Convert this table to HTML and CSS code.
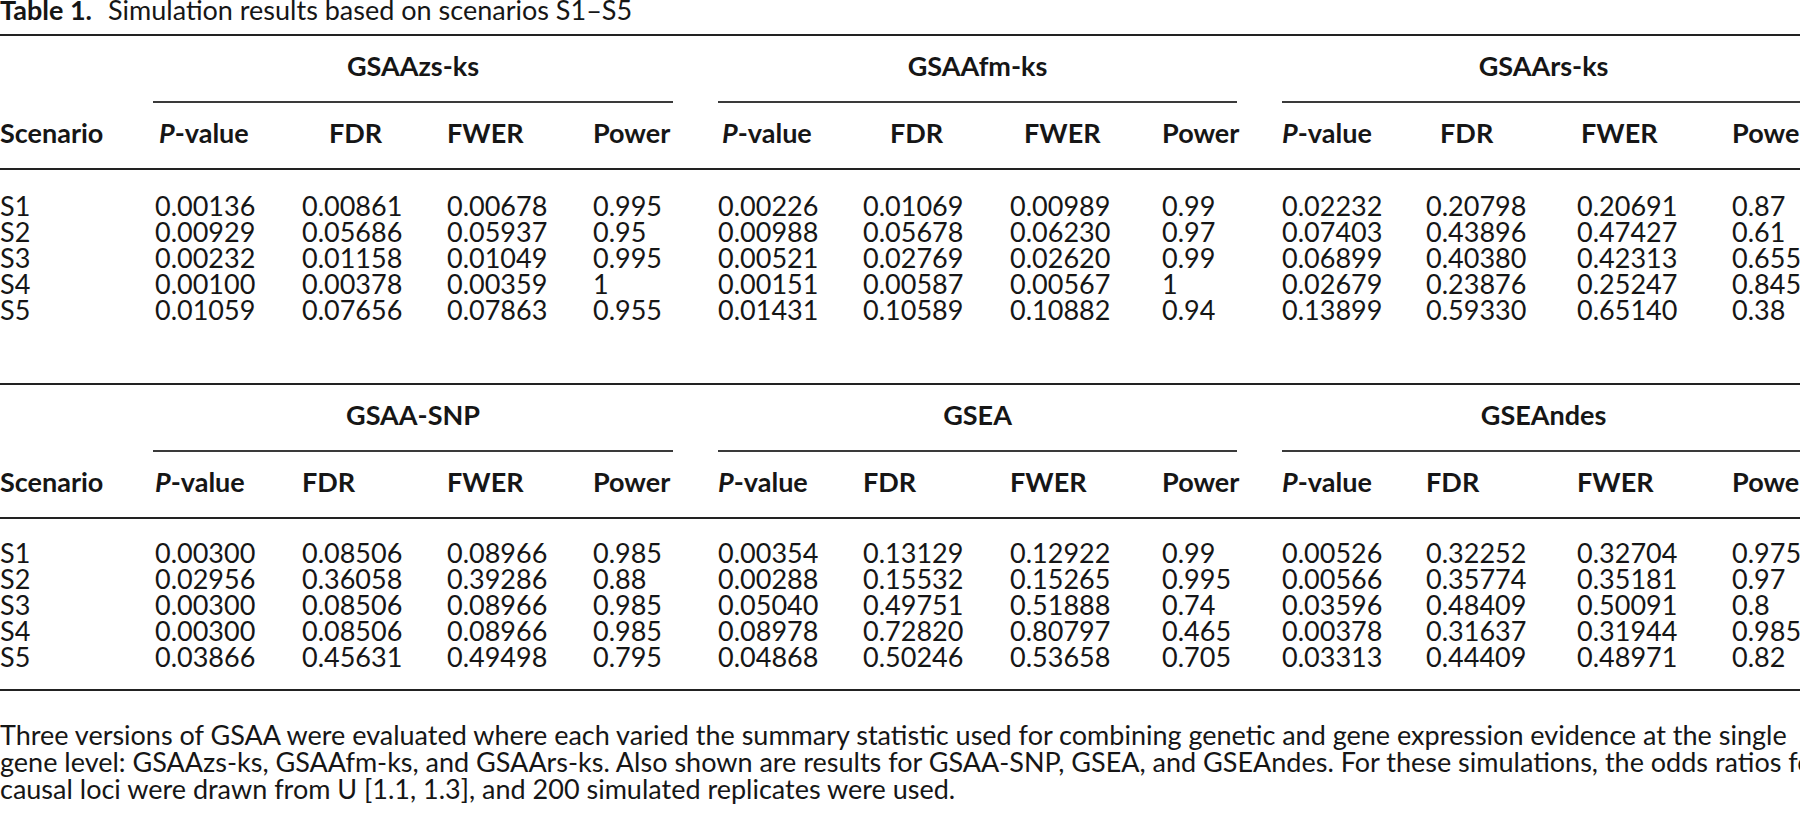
FILE: index.html
```html
<!DOCTYPE html>
<html lang="en">
<head>
    <meta charset="UTF-8">
    <title>Table 1</title>
    <link rel="stylesheet" href="styles.css">
</head>
<body>
<div class="page">
    <p class="caption"><b>Table 1.</b><span>Simulation results based on scenarios S1–S5</span></p>

    <!-- GSAA variants -->
    <table class="results first">
        <colgroup>
            <col class="w-scen">
            <col class="w-p"><col class="w-fdr"><col class="w-fwer"><col class="w-pow1">
            <col class="w-p2"><col class="w-fdr2"><col class="w-fwer2"><col class="w-pow2">
            <col class="w-p3"><col class="w-fdr3"><col class="w-fwer3"><col class="w-pow3">
        </colgroup>
        <thead>
        <tr class="groups">
            <th></th>
            <th colspan="4"><div class="group g1">GSAAzs-ks</div></th>
            <th colspan="4"><div class="group">GSAAfm-ks</div></th>
            <th colspan="4"><div class="group">GSAArs-ks</div></th>
        </tr>
        <tr class="cols">
            <th>Scenario</th>
            <th class="pv"><i>P</i>-value</th><th class="fdr">FDR</th><th>FWER</th><th>Power</th>
            <th class="pv"><i>P</i>-value</th><th class="fdr">FDR</th><th class="fwer">FWER</th><th>Power</th>
            <th><i>P</i>-value</th><th class="fdr3">FDR</th><th class="fwer3">FWER</th><th>Power</th>
        </tr>
        </thead>
        <tbody>
        <tr><td>S1</td><td>0.00136</td><td>0.00861</td><td>0.00678</td><td>0.995</td><td>0.00226</td><td>0.01069</td><td>0.00989</td><td>0.99</td><td>0.02232</td><td>0.20798</td><td>0.20691</td><td>0.87</td></tr>
        <tr><td>S2</td><td>0.00929</td><td>0.05686</td><td>0.05937</td><td>0.95</td><td>0.00988</td><td>0.05678</td><td>0.06230</td><td>0.97</td><td>0.07403</td><td>0.43896</td><td>0.47427</td><td>0.61</td></tr>
        <tr><td>S3</td><td>0.00232</td><td>0.01158</td><td>0.01049</td><td>0.995</td><td>0.00521</td><td>0.02769</td><td>0.02620</td><td>0.99</td><td>0.06899</td><td>0.40380</td><td>0.42313</td><td>0.655</td></tr>
        <tr><td>S4</td><td>0.00100</td><td>0.00378</td><td>0.00359</td><td>1</td><td>0.00151</td><td>0.00587</td><td>0.00567</td><td>1</td><td>0.02679</td><td>0.23876</td><td>0.25247</td><td>0.845</td></tr>
        <tr><td>S5</td><td>0.01059</td><td>0.07656</td><td>0.07863</td><td>0.955</td><td>0.01431</td><td>0.10589</td><td>0.10882</td><td>0.94</td><td>0.13899</td><td>0.59330</td><td>0.65140</td><td>0.38</td></tr>
        </tbody>
    </table>

    <!-- other methods -->
    <table class="results second">
        <colgroup>
            <col class="w-scen">
            <col class="w-p"><col class="w-fdr"><col class="w-fwer"><col class="w-pow1">
            <col class="w-p2"><col class="w-fdr2"><col class="w-fwer2"><col class="w-pow2">
            <col class="w-p3"><col class="w-fdr3"><col class="w-fwer3"><col class="w-pow3">
        </colgroup>
        <thead>
        <tr class="groups">
            <th></th>
            <th colspan="4"><div class="group g1">GSAA-SNP</div></th>
            <th colspan="4"><div class="group">GSEA</div></th>
            <th colspan="4"><div class="group">GSEAndes</div></th>
        </tr>
        <tr class="cols">
            <th>Scenario</th>
            <th><i>P</i>-value</th><th>FDR</th><th>FWER</th><th>Power</th>
            <th><i>P</i>-value</th><th>FDR</th><th>FWER</th><th>Power</th>
            <th><i>P</i>-value</th><th>FDR</th><th>FWER</th><th>Power</th>
        </tr>
        </thead>
        <tbody>
        <tr><td>S1</td><td>0.00300</td><td>0.08506</td><td>0.08966</td><td>0.985</td><td>0.00354</td><td>0.13129</td><td>0.12922</td><td>0.99</td><td>0.00526</td><td>0.32252</td><td>0.32704</td><td>0.975</td></tr>
        <tr><td>S2</td><td>0.02956</td><td>0.36058</td><td>0.39286</td><td>0.88</td><td>0.00288</td><td>0.15532</td><td>0.15265</td><td>0.995</td><td>0.00566</td><td>0.35774</td><td>0.35181</td><td>0.97</td></tr>
        <tr><td>S3</td><td>0.00300</td><td>0.08506</td><td>0.08966</td><td>0.985</td><td>0.05040</td><td>0.49751</td><td>0.51888</td><td>0.74</td><td>0.03596</td><td>0.48409</td><td>0.50091</td><td>0.8</td></tr>
        <tr><td>S4</td><td>0.00300</td><td>0.08506</td><td>0.08966</td><td>0.985</td><td>0.08978</td><td>0.72820</td><td>0.80797</td><td>0.465</td><td>0.00378</td><td>0.31637</td><td>0.31944</td><td>0.985</td></tr>
        <tr><td>S5</td><td>0.03866</td><td>0.45631</td><td>0.49498</td><td>0.795</td><td>0.04868</td><td>0.50246</td><td>0.53658</td><td>0.705</td><td>0.03313</td><td>0.44409</td><td>0.48971</td><td>0.82</td></tr>
        </tbody>
    </table>

    <p class="note">Three versions of GSAA were evaluated where each varied the summary statistic used for combining genetic and gene expression evidence at the single gene level: GSAAzs-ks, GSAAfm-ks, and GSAArs-ks. Also shown are results for GSAA-SNP, GSEA, and GSEAndes. For these simulations, the odds ratios for causal loci were drawn from U [1.1, 1.3], and 200 simulated replicates were used.</p>
</div>
</body>
</html>
```

FILE: styles.css
```css
html, body {
    margin: 0;
    padding: 0;
    background: #fff;
}

body {
    width: 1800px;
    height: 822px;
    overflow: hidden;
    font-family: Lato, "Open Sans", sans-serif;
    font-size: 27px;
    color: #161616;
}

.page {
    width: 1850px;
}

.caption {
    margin: -5px 0 0 0;
    line-height: 30px;
    white-space: nowrap;
}

.caption b {
    margin-right: 16px;
}

.results {
    width: 1850px;
    table-layout: fixed;
    border-collapse: collapse;
    border-spacing: 0;
    border-top: 2px solid #222;
    line-height: 30px;
}

.results th,
.results td {
    padding: 0;
    text-align: left;
    white-space: nowrap;
    vertical-align: top;
}

.results th {
    font-weight: bold;
}

.results td {
    line-height: 26px;
}

/* column widths, left edge of each data column */
.w-scen { width: 155px; }
.w-p { width: 147px; }
.w-fdr { width: 145px; }
.w-fwer { width: 146px; }
.w-pow1 { width: 125px; }
.w-p2 { width: 145px; }
.w-fdr2 { width: 147px; }
.w-fwer2 { width: 152px; }
.w-pow2 { width: 120px; }
.w-p3 { width: 144px; }
.w-fdr3 { width: 151px; }
.w-fwer3 { width: 155px; }
.w-pow3 { width: 118px; }

.groups th {
    padding-top: 15px;
}

.group {
    margin-right: 45px;
    padding-bottom: 20px;
    border-bottom: 2px solid #3a3a3a;
    text-align: center;
}

.group.g1 {
    margin-left: -2px;
}

.cols th {
    padding-top: 15px;
    padding-bottom: 20px;
    border-bottom: 2px solid #222;
}

.first .cols th.pv {
    padding-left: 4px;
}

.first .cols th.fdr {
    padding-left: 27px;
}

.first .cols th.fwer {
    padding-left: 14px;
}

.first .cols th.fdr3 {
    padding-left: 14px;
}

.first .cols th.fwer3 {
    padding-left: 4px;
}

.results tbody tr:first-child td {
    padding-top: 23px;
}

.first {
    margin-top: 9px;
}

.first tbody tr:last-child td {
    padding-bottom: 18px;
}

.second {
    margin-top: 42px;
    border-bottom: 2px solid #222;
}

.second tbody tr:first-child td {
    padding-top: 21px;
}

.second tbody tr:last-child td {
    padding-bottom: 19px;
}

.note {
    width: 1830px;
    margin: 30px 0 0 0;
    line-height: 27px;
}
```
